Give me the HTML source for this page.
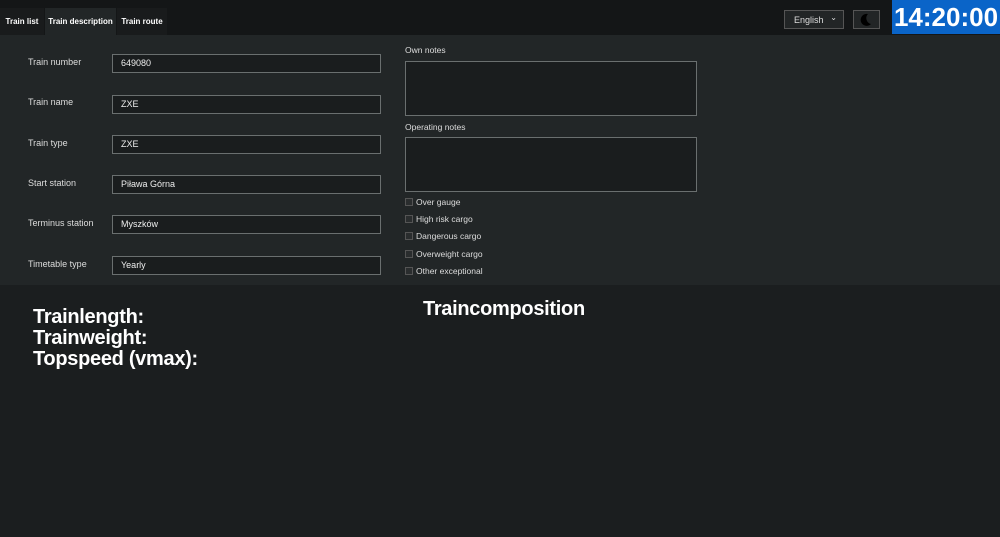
<!DOCTYPE html><html><head><style>
body{margin:0;width:1000px;height:537px;background:#1b1e1f;font-family:"Liberation Sans",sans-serif;color:#ddd;position:relative;overflow:hidden}
.top{position:absolute;left:0;top:0;width:1000px;height:35px;background:#141617}
.tab{position:absolute;top:8px;height:27px;line-height:27px;font-size:8px;font-weight:bold;color:#fff;text-align:center;white-space:nowrap}
.panel{position:absolute;left:0;top:35px;width:1000px;height:250px;background:#222627}
.lbl{position:absolute;left:28px;font-size:9px;color:#ddd}
.inp{position:absolute;left:112px;width:259px;height:17px;border:1px solid #6a6f6f;background:#1a1d1e;font-size:9px;line-height:17px;padding-left:8px;color:#eee}
.ta{position:absolute;left:405px;width:290px;border:1px solid #6a6f6f;background:#1a1d1e}
.cb{position:absolute;left:405px;font-size:8.5px;color:#ddd}
.cb i{display:inline-block;width:6px;height:6px;border:1px solid #555;background:#2a2d2e;margin-right:3px;vertical-align:-1px}
h2{position:absolute;margin:0;font-size:20px;font-weight:bold;color:#fff;font-family:"Liberation Sans",sans-serif;letter-spacing:-0.3px}
</style></head><body>
<div class="top"></div>
<div class="tab" style="left:0;width:44px;background:#191b1c">Train list</div>
<div class="tab" style="left:45px;width:71px;background:#222627">Train description</div>
<div class="tab" style="left:117px;width:50px;background:#191b1c">Train route</div>
<div style="position:absolute;left:784px;top:10px;width:60px;height:19px;border:1px solid #555;background:#222526;font-size:9px;line-height:18px;color:#ddd;padding-left:9px;box-sizing:border-box">English <span style="position:absolute;right:6px;top:-2px;font-size:8px">&#8964;</span></div>
<div style="position:absolute;left:853px;top:10px;width:27px;height:19px;border:1px solid #555;background:#222526;box-sizing:border-box"><svg width="25" height="17" viewBox="0 0 25 17"><path d="M14 3a6 6 0 1 0 3 10 6 6 0 0 1-3-10z" fill="#000"/></svg></div>
<div style="position:absolute;left:892px;top:0;width:108px;height:34px;background:#0a64c8;color:#fff;font-size:26px;font-weight:bold;line-height:34px;text-align:center">14:20:00</div>
<div class="panel"></div>
<div class="lbl" style="top:57px">Train number</div><div class="inp" style="top:54px">649080</div>
<div class="lbl" style="top:97px">Train name</div><div class="inp" style="top:95px">ZXE</div>
<div class="lbl" style="top:138px">Train type</div><div class="inp" style="top:135px">ZXE</div>
<div class="lbl" style="top:178px">Start station</div><div class="inp" style="top:175px">Piława Górna</div>
<div class="lbl" style="top:218px">Terminus station</div><div class="inp" style="top:215px">Myszków</div>
<div class="lbl" style="top:259px">Timetable type</div><div class="inp" style="top:256px">Yearly</div>
<div class="cb" style="top:45px">Own notes</div>
<div class="ta" style="top:61px;height:53px"></div>
<div class="cb" style="top:122px">Operating notes</div>
<div class="ta" style="top:137px;height:53px"></div>
<div class="cb" style="top:197px"><i></i>Over gauge</div>
<div class="cb" style="top:214px"><i></i>High risk cargo</div>
<div class="cb" style="top:231px"><i></i>Dangerous cargo</div>
<div class="cb" style="top:249px"><i></i>Overweight cargo</div>
<div class="cb" style="top:266px"><i></i>Other exceptional</div>
<h2 style="left:33px;top:307px;line-height:21px">Trainlength:<br>Trainweight:<br>Topspeed (vmax):</h2>
<h2 style="left:423px;top:298px">Traincomposition</h2>
</body></html>
